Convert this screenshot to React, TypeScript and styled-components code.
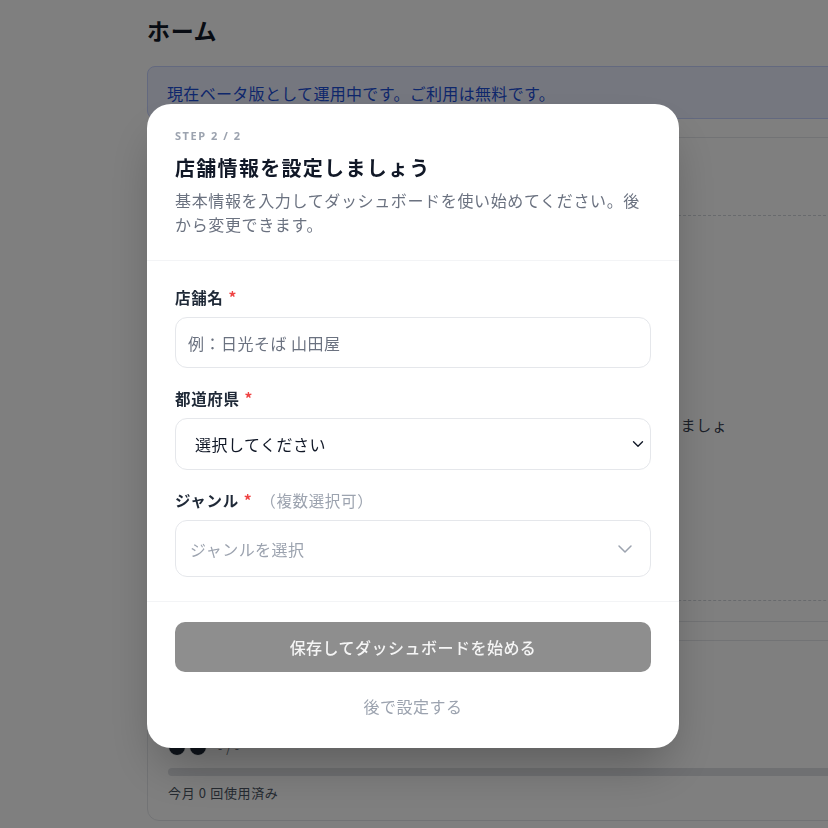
import { ChevronDown } from "lucide-react";
import styled, { createGlobalStyle } from "styled-components";

const GlobalStyle = createGlobalStyle`
  * {
    box-sizing: border-box;
  }
  html,
  body {
    margin: 0;
    padding: 0;
    background: #ffffff;
    overflow: hidden;
  }
  body {
    font-family: "Noto Sans CJK JP", "Noto Sans", sans-serif;
    color: #111827;
    letter-spacing: 0.04em;
  }
`;

const Page = styled.div`
  width: 828px;
  height: 828px;
  overflow: hidden;
  padding: 14px 0 0 147px;
`;

const Main = styled.main`
  width: 740px;
  display: flex;
  flex-direction: column;
`;

const PageTitle = styled.h1`
  margin: 0 0 20px;
  font-size: 23px;
  line-height: 32px;
  font-weight: 700;
  color: #111827;
`;

const Banner = styled.div`
  height: 53px;
  display: flex;
  align-items: center;
  padding: 0 19px;
  border: 1px solid #c7d2fe;
  border-radius: 8px;
  background: #eaefff;
  color: #1d4ed8;
  font-size: 16px;
  letter-spacing: 0.02em;
  margin-bottom: 18px;
`;

const Card = styled.section<{ $height: number }>`
  height: ${(p) => p.$height}px;
  border: 1px solid #e5e7eb;
  border-radius: 12px;
  background: #ffffff;
  padding: 0 20px 20px;
  display: flex;
  flex-direction: column;
  margin-bottom: 18px;
`;

const CardHead = styled.div`
  height: 77px;
`;

const DropZone = styled.div`
  flex: 1;
  border: 1px dashed #d1d5db;
  border-radius: 10px;
  display: flex;
  flex-direction: column;
  align-items: center;
  justify-content: center;
  text-align: center;
  font-size: 15px;
  line-height: 24px;
  color: #374151;
`;

const DropIcon = styled.div`
  width: 48px;
  height: 48px;
  border-radius: 50%;
  background: #f3f4f6;
  margin-bottom: 10px;
`;

const UsageCard = styled(Card)`
  justify-content: flex-end;
  padding-bottom: 18px;
`;

const AvatarRow = styled.div`
  display: flex;
  align-items: center;
  gap: 3px;
  height: 18px;
  margin-bottom: 12px;
  font-size: 12px;
  color: #6b7280;
`;

const Avatar = styled.span`
  width: 18px;
  height: 18px;
  border-radius: 50%;
  background: #1f2937;
  border: 1px solid #ffffff;
`;

const AvatarNote = styled.span`
  margin-left: 8px;
`;

const UsageBar = styled.div`
  height: 8px;
  border-radius: 4px;
  background: #dfe1e5;
  margin-bottom: 8px;
`;

const UsageText = styled.div`
  font-size: 13px;
  line-height: 18px;
  color: #4b5563;
`;

const Overlay = styled.div`
  position: fixed;
  inset: 0;
  background: rgba(0, 0, 0, 0.5);
  display: flex;
  justify-content: center;
  align-items: flex-start;
  padding: 104px 2px 0 0;
`;

const Modal = styled.div`
  width: 532px;
  background: #ffffff;
  border-radius: 24px;
  box-shadow: 0 25px 50px -12px rgba(0, 0, 0, 0.3);
  display: flex;
  flex-direction: column;
  overflow: hidden;
`;

const ModalHeader = styled.div`
  padding: 24px 28px 24px;
  border-bottom: 1px solid #f3f4f6;
`;

const Step = styled.div`
  font-family: "Noto Sans", "Open Sans", sans-serif;
  font-size: 11px;
  line-height: 16px;
  font-weight: 700;
  letter-spacing: 0.14em;
  color: #9ca3af;
`;

const Title = styled.h2`
  margin: 10px 0 0;
  font-size: 20px;
  line-height: 28px;
  font-weight: 700;
  letter-spacing: 0.065em;
  color: #111827;
`;

const Description = styled.p`
  margin: 6px 0 0;
  font-size: 16px;
  line-height: 24px;
  color: #6b7280;
`;

const ModalBody = styled.div`
  padding: 25px 28px 24px;
  display: flex;
  flex-direction: column;
  gap: 19px;
  border-bottom: 1px solid #f3f4f6;
`;

const Field = styled.div`
  display: flex;
  flex-direction: column;
  gap: 9px;
`;

const Label = styled.label`
  font-size: 15.5px;
  line-height: 22px;
  font-weight: 700;
  color: #1f2937;
`;

const Required = styled.span`
  color: #ef4444;
  margin-left: 5px;
`;

const Hint = styled.span`
  margin-left: 8px;
  font-weight: 400;
  color: #9ca3af;
`;

const TextInput = styled.input`
  height: 51px;
  width: 100%;
  border: 1px solid #e5e7eb;
  border-radius: 12px;
  padding: 0 12px;
  font-family: inherit;
  font-size: 16px;
  letter-spacing: 0.03em;
  color: #111827;
  outline: none;

  &::placeholder {
    color: #6b7280;
  }
`;

const SelectBox = styled.div<{ $height: number; $muted?: boolean }>`
  height: ${(p) => p.$height}px;
  border: 1px solid #e5e7eb;
  border-radius: 12px;
  display: flex;
  align-items: center;
  justify-content: space-between;
  padding: ${(p) => (p.$muted ? "0 13px 0 14px" : "0 3px 0 19px")};
  font-size: 16px;
  letter-spacing: 0.03em;
  color: ${(p) => (p.$muted ? "#9ca3af" : "#111827")};
  background: #ffffff;
`;

const ModalFooter = styled.div`
  padding: 20px 28px 20px;
  display: flex;
  flex-direction: column;
  align-items: stretch;
`;

const PrimaryButton = styled.button`
  height: 50px;
  border: none;
  border-radius: 10px;
  background: #8e8e8e;
  color: #f5f5f5;
  font-family: inherit;
  font-size: 16px;
  font-weight: 500;
  letter-spacing: 0.03em;
  cursor: not-allowed;
`;

const LaterButton = styled.button`
  margin-top: 12px;
  height: 44px;
  border: none;
  background: transparent;
  color: #9ca3af;
  font-family: inherit;
  font-size: 16px;
  letter-spacing: 0.03em;
  cursor: pointer;
`;

export default function App() {
  return (
    <>
      <GlobalStyle />
      <Page>
        <Main>
          <PageTitle>ホーム</PageTitle>
          <Banner>現在ベータ版として運用中です。ご利用は無料です。</Banner>
          <Card $height={485}>
            <CardHead />
            <DropZone>
              <DropIcon />
              メニューの写真をアップロードして、紹介文を作成しましょ
              <br />
              う。
            </DropZone>
          </Card>
          <UsageCard $height={181}>
            <AvatarRow>
              <Avatar />
              <Avatar />
              <AvatarNote>- / -</AvatarNote>
            </AvatarRow>
            <UsageBar />
            <UsageText>今月 0 回使用済み</UsageText>
          </UsageCard>
        </Main>
      </Page>

      <Overlay>
        <Modal>
          <ModalHeader>
            <Step>STEP 2 / 2</Step>
            <Title>店舗情報を設定しましょう</Title>
            <Description>
              基本情報を入力してダッシュボードを使い始めてください。後から変更できます。
            </Description>
          </ModalHeader>

          <ModalBody>
            <Field>
              <Label>
                店舗名<Required>*</Required>
              </Label>
              <TextInput placeholder="例：日光そば 山田屋" />
            </Field>
            <Field>
              <Label>
                都道府県<Required>*</Required>
              </Label>
              <SelectBox $height={52}>
                選択してください
                <ChevronDown size={18} strokeWidth={1.8} color="#111827" />
              </SelectBox>
            </Field>
            <Field>
              <Label>
                ジャンル<Required>*</Required>
                <Hint>（複数選択可）</Hint>
              </Label>
              <SelectBox $height={57} $muted>
                ジャンルを選択
                <ChevronDown size={24} strokeWidth={1.5} color="#9ca3af" />
              </SelectBox>
            </Field>
          </ModalBody>

          <ModalFooter>
            <PrimaryButton disabled>保存してダッシュボードを始める</PrimaryButton>
            <LaterButton>後で設定する</LaterButton>
          </ModalFooter>
        </Modal>
      </Overlay>
    </>
  );
}
